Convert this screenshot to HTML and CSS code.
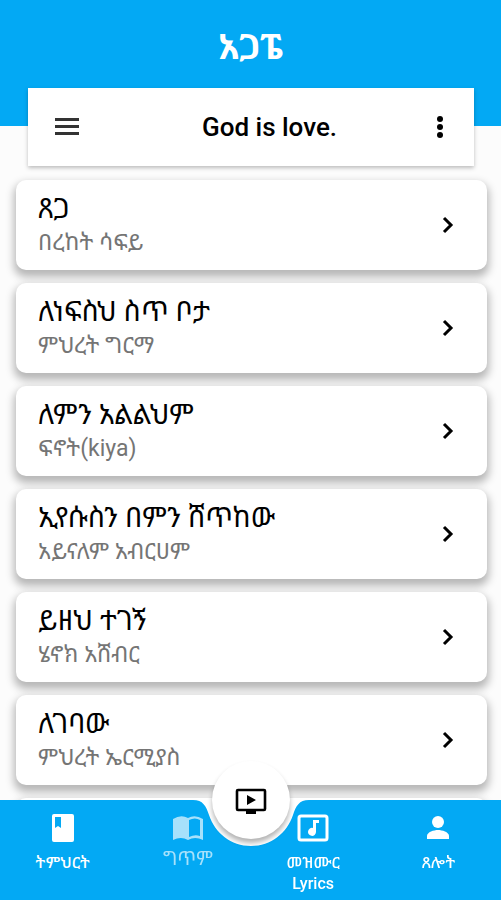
FILE: index.html
```html
<!DOCTYPE html>
<html lang="am">
<head>
  <meta charset="UTF-8">
  <meta name="viewport" content="width=device-width, initial-scale=1">
  <title>አጋፔ</title>
  <link rel="stylesheet" href="styles.css">
</head>
<body>
  <header class="header">
    <h1>አጋፔ</h1>
  </header>

  <div class="toolbar">
    <button type="button" class="icon-btn" aria-label="Menu">
      <svg viewBox="0 0 24 24"><path d="M0 3h24v3H0zM0 10h24v3H0zM0 17h24v3H0z" fill="#333"/></svg>
    </button>
    <h2>God is love.</h2>
    <button type="button" class="icon-btn" aria-label="More">
      <svg viewBox="0 0 24 24"><circle cx="12" cy="4" r="3"/><circle cx="12" cy="12" r="3"/><circle cx="12" cy="20" r="3"/></svg>
    </button>
  </div>

  <main class="songs">
    <a class="card" href="#song1">
      <div class="card-text">
        <p class="song">ጸጋ</p>
        <p class="singer">በረከት ሳፍይ</p>
      </div>
      <svg class="arrow" viewBox="0 0 24 24"><path d="M8 5l7 7-7 7"/></svg>
    </a>
    <a class="card" href="#song2">
      <div class="card-text">
        <p class="song">ለነፍስህ ስጥ ቦታ</p>
        <p class="singer">ምህረት ግርማ</p>
      </div>
      <svg class="arrow" viewBox="0 0 24 24"><path d="M8 5l7 7-7 7"/></svg>
    </a>
    <a class="card" href="#song3">
      <div class="card-text">
        <p class="song">ለምን አልልህም</p>
        <p class="singer">ፍኖት(kiya)</p>
      </div>
      <svg class="arrow" viewBox="0 0 24 24"><path d="M8 5l7 7-7 7"/></svg>
    </a>
    <a class="card" href="#song4">
      <div class="card-text">
        <p class="song">ኢየሱስን በምን ሸጥከው</p>
        <p class="singer">አይናለም አብርሀም</p>
      </div>
      <svg class="arrow" viewBox="0 0 24 24"><path d="M8 5l7 7-7 7"/></svg>
    </a>
    <a class="card" href="#song5">
      <div class="card-text">
        <p class="song">ይዘህ ተገኝ</p>
        <p class="singer">ሄኖክ አሸብር</p>
      </div>
      <svg class="arrow" viewBox="0 0 24 24"><path d="M8 5l7 7-7 7"/></svg>
    </a>
    <a class="card" href="#song6">
      <div class="card-text">
        <p class="song">ለገባው</p>
        <p class="singer">ምህረት ኤርሚያስ</p>
      </div>
      <svg class="arrow" viewBox="0 0 24 24"><path d="M8 5l7 7-7 7"/></svg>
    </a>
    <div class="card"></div>
  </main>

  <nav class="bottom-nav">
    <div class="nav-bg">
      <span></span>
      <svg viewBox="0 0 120 100"><path d="M0 0H2C12 0 15 6 18 15C24 33 40 46 60 46C80 46 96 33 102 15C105 6 108 0 118 0H120V100H0Z" fill="#03a9f4"/></svg>
      <span></span>
    </div>

    <a class="nav-item" href="#lessons">
      <svg viewBox="0 0 32 32"><path fill-rule="evenodd" d="M7 2h18q2 0 2 2v24q0 2-2 2H7q-2 0-2-2V4q0-2 2-2zM8 5v11l3-2 3 2V5z"/></svg>
      <span>ትምህርት</span>
    </a>
    <a class="nav-item active" href="#poems">
      <svg viewBox="0 0 32 32"><path d="M1 7Q9 2 16 6Q23 2 31 7V28Q23 24 16 28Q9 24 1 28zM17 8V25Q23 22 28 24V8Q23 5 17 8z" fill-rule="evenodd"/></svg>
      <span>ግጥም</span>
    </a>
    <a class="nav-item" href="#lyrics">
      <svg viewBox="0 0 32 32"><rect x="2" y="4" width="28" height="24" rx="2" fill="none" stroke="#fff" stroke-width="3"/><path d="M16 8h6v3h-3v9a4 4 0 1 1-3-4z"/></svg>
      <span>መዝሙር<br>Lyrics</span>
    </a>
    <a class="nav-item" href="#prayer">
      <svg viewBox="0 0 32 32"><circle cx="16" cy="10" r="6"/><path d="M5 27v-3c0-4 7-6 11-6s11 2 11 6v3z"/></svg>
      <span>ጸሎት</span>
    </a>

    <button type="button" class="fab" aria-label="Videos">
      <svg viewBox="0 0 32 32"><rect x="2" y="6" width="28" height="20" rx="1" fill="none" stroke="#000" stroke-width="2.6"/><path d="M12 11v10l9-5zM11 26h10v4H11z"/></svg>
    </button>
  </nav>
</body>
</html>
```

FILE: styles.css
```css
* {
  box-sizing: border-box;
}

body {
  margin: 0;
  height: 100vh;
  display: flex;
  flex-direction: column;
  overflow: hidden;
  background: #fcfcfc;
  font-family: Roboto, "Noto Sans Ethiopic", "Noto Sans", sans-serif;
  color: #000;
}

h1, h2, p {
  margin: 0;
}

button {
  padding: 0;
  border: none;
  background: none;
  cursor: pointer;
}

a {
  color: inherit;
  text-decoration: none;
}

svg {
  display: block;
}

.header {
  flex: none;
  height: 126px;
  padding-top: 28px;
  background: #03a9f4;
  color: white;
  text-align: center;
}

.header h1 {
  font-size: 35px;
  line-height: 40px;
}

.toolbar {
  flex: none;
  display: flex;
  align-items: center;
  height: 78px;
  margin: -38px 27px 0 28px;
  padding: 0 22px 0 27px;
  background: white;
  box-shadow: 0 2px 4px rgba(0,0,0,0.25);
}

.toolbar h2 {
  flex: 1;
  padding-left: 32px;
  font-size: 26px;
  font-weight: 500;
  text-align: center;
}

.icon-btn svg {
  width: 24px;
  height: 24px;
}

.songs {
  flex: 1;
  min-height: 0;
  display: flex;
  flex-direction: column;
  gap: 13px;
  padding: 14px 14px 0 16px;
  overflow: hidden;
}

.card {
  flex: none;
  display: flex;
  align-items: center;
  min-height: 90px;
  padding: 11px 27px 11px 22px;
  background: white;
  border-radius: 10px;
  box-shadow: 0 5px 8px 2px rgba(0,0,0,0.28);
}

.card-text {
  flex: 1;
}

.song {
  font-size: 28px;
  line-height: 36px;
}

.singer {
  font-size: 23px;
  line-height: 32px;
  color: #757575;
}

.arrow {
  width: 24px;
  height: 24px;
  fill: none;
  stroke: #000;
  stroke-width: 3;
}

.bottom-nav {
  position: fixed;
  left: 0;
  right: 0;
  bottom: 0;
  height: 100px;
  display: grid;
  grid-template-columns: repeat(4, 1fr);
  color: white;
}

/* bar with the round notch in the middle */
.nav-bg {
  position: absolute;
  inset: 0;
  display: flex;
}

.nav-bg span {
  flex: 1;
  background: #03a9f4;
}

/* overlaps the sides by 1px so that no seam shows */
.nav-bg svg {
  width: 120px;
  height: 100px;
  margin: 0 -1px;
}

.nav-item {
  position: relative;
  display: flex;
  flex-direction: column;
  align-items: center;
  padding-top: 12px;
  font-size: 16px;
  line-height: 21px;
  font-weight: 500;
  text-align: center;
}

.nav-item svg {
  width: 32px;
  height: 32px;
  margin-bottom: 8px;
  fill: white;
}

.nav-item.active {
  font-size: 19px;
  font-weight: 400;
  opacity: 0.65;
}

.nav-item.active svg {
  margin-bottom: 4px;
}

.fab {
  position: absolute;
  top: -39px;
  left: calc(50% - 39px);
  width: 78px;
  height: 78px;
  display: flex;
  align-items: center;
  justify-content: center;
  border-radius: 50%;
  background: white;
  box-shadow: 0 4px 5px rgba(0,0,0,0.3);
}

.fab svg {
  width: 32px;
  height: 32px;
}
```
